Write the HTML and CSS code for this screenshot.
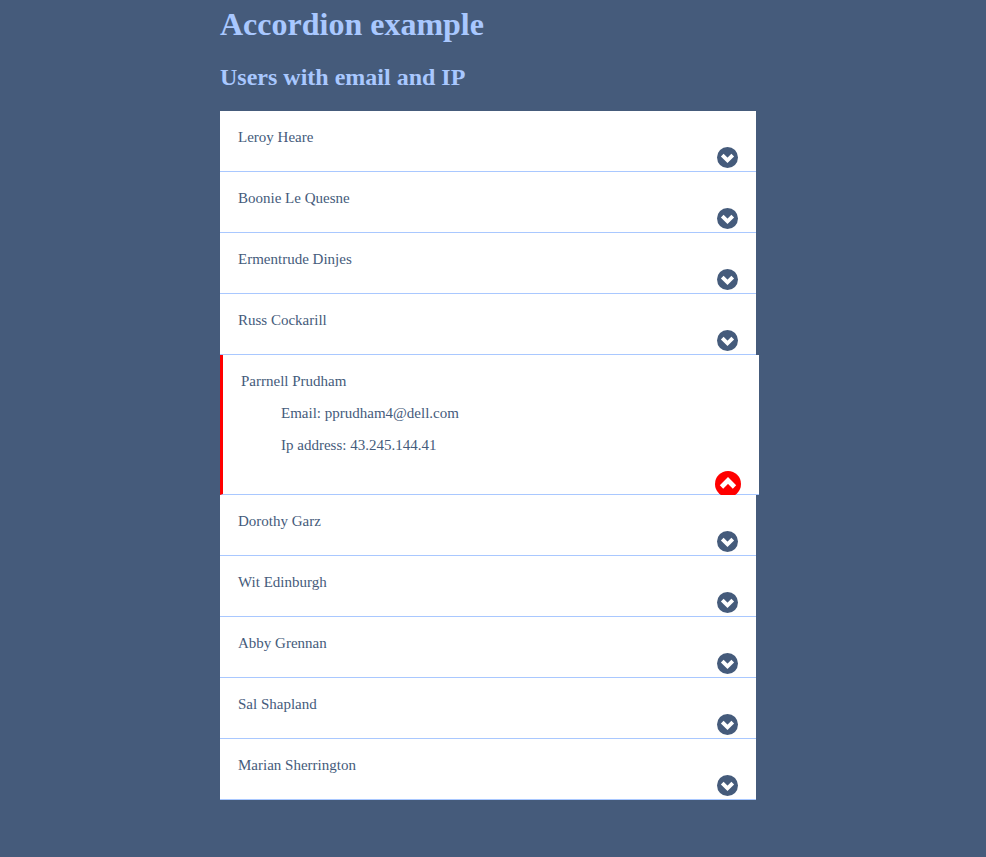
FILE: index.html

```html
<!DOCTYPE html>
<html lang="en">
<head>
    <meta charset="UTF-8">
    <title>Accordion example</title>
    <link rel="stylesheet" href="styles.css">
</head>
<body>
    <div class="container">
        <h1>Accordion example</h1>
        <h2>Users with email and IP</h2>
        <div class="accordion">
            <div class="item">
                <p class="name">Leroy Heare</p>
                <svg class="toggle" viewBox="0 0 22 22"><circle cx="11" cy="11" r="11"/><polyline points="5.5,8.5 11,14 16.5,8.5"/></svg>
            </div>
            <div class="item">
                <p class="name">Boonie Le Quesne</p>
                <svg class="toggle" viewBox="0 0 22 22"><circle cx="11" cy="11" r="11"/><polyline points="5.5,8.5 11,14 16.5,8.5"/></svg>
            </div>
            <div class="item">
                <p class="name">Ermentrude Dinjes</p>
                <svg class="toggle" viewBox="0 0 22 22"><circle cx="11" cy="11" r="11"/><polyline points="5.5,8.5 11,14 16.5,8.5"/></svg>
            </div>
            <div class="item">
                <p class="name">Russ Cockarill</p>
                <svg class="toggle" viewBox="0 0 22 22"><circle cx="11" cy="11" r="11"/><polyline points="5.5,8.5 11,14 16.5,8.5"/></svg>
            </div>
            <div class="item open">
                <p class="name">Parrnell Prudham</p>
                <div class="details">
                    <p>Email: pprudham4@dell.com</p>
                    <p>Ip address: 43.245.144.41</p>
                </div>
                <svg class="toggle" viewBox="0 0 22 22"><circle cx="11" cy="11" r="11"/><polyline points="5.5,13.5 11,8 16.5,13.5"/></svg>
            </div>
            <div class="item">
                <p class="name">Dorothy Garz</p>
                <svg class="toggle" viewBox="0 0 22 22"><circle cx="11" cy="11" r="11"/><polyline points="5.5,8.5 11,14 16.5,8.5"/></svg>
            </div>
            <div class="item">
                <p class="name">Wit Edinburgh</p>
                <svg class="toggle" viewBox="0 0 22 22"><circle cx="11" cy="11" r="11"/><polyline points="5.5,8.5 11,14 16.5,8.5"/></svg>
            </div>
            <div class="item">
                <p class="name">Abby Grennan</p>
                <svg class="toggle" viewBox="0 0 22 22"><circle cx="11" cy="11" r="11"/><polyline points="5.5,8.5 11,14 16.5,8.5"/></svg>
            </div>
            <div class="item">
                <p class="name">Sal Shapland</p>
                <svg class="toggle" viewBox="0 0 22 22"><circle cx="11" cy="11" r="11"/><polyline points="5.5,8.5 11,14 16.5,8.5"/></svg>
            </div>
            <div class="item">
                <p class="name">Marian Sherrington</p>
                <svg class="toggle" viewBox="0 0 22 22"><circle cx="11" cy="11" r="11"/><polyline points="5.5,8.5 11,14 16.5,8.5"/></svg>
            </div>
        </div>
    </div>
</body>
</html>
```

FILE: styles.css

```css
body {
    background-color: #455b7b;
    color: #455b7b;
    font-family: "Liberation Serif", serif;
    font-size: 15px;
    margin: 0;
    padding: 0;
}

.container {
    width: 536px;
    margin-left: 220px;
}

h1, h2 {
    color: #a9c8ff;
    font-weight: bold;
}

h1 {
    font-size: 32px;
    margin: 6px 0 0;
}

h2 {
    font-size: 24px;
    margin: 21px 0 20px;
}

.item {
    position: relative;
    height: 42px;
    padding: 18px 18px 0;
    background-color: white;
    border-bottom: 1px solid #a9c8ff;
}

.name {
    margin: 0;
}

.toggle {
    position: absolute;
    right: 18px;
    bottom: 3px;
    width: 21px;
    height: 21px;
}

.toggle circle {
    fill: #455b7b;
}

.toggle polyline {
    fill: none;
    stroke: white;
    stroke-width: 4;
}

/* Fila abierta */
.item.open {
    height: 121px;
    margin-right: -3px;
    border-left: 3px solid red;
}

.item.open .toggle {
    bottom: -3px;
    width: 26px;
    height: 26px;
}

.item.open .toggle circle {
    fill: red;
}

.details {
    padding-left: 40px;
}

.details p {
    margin: 15px 0;
}
```
